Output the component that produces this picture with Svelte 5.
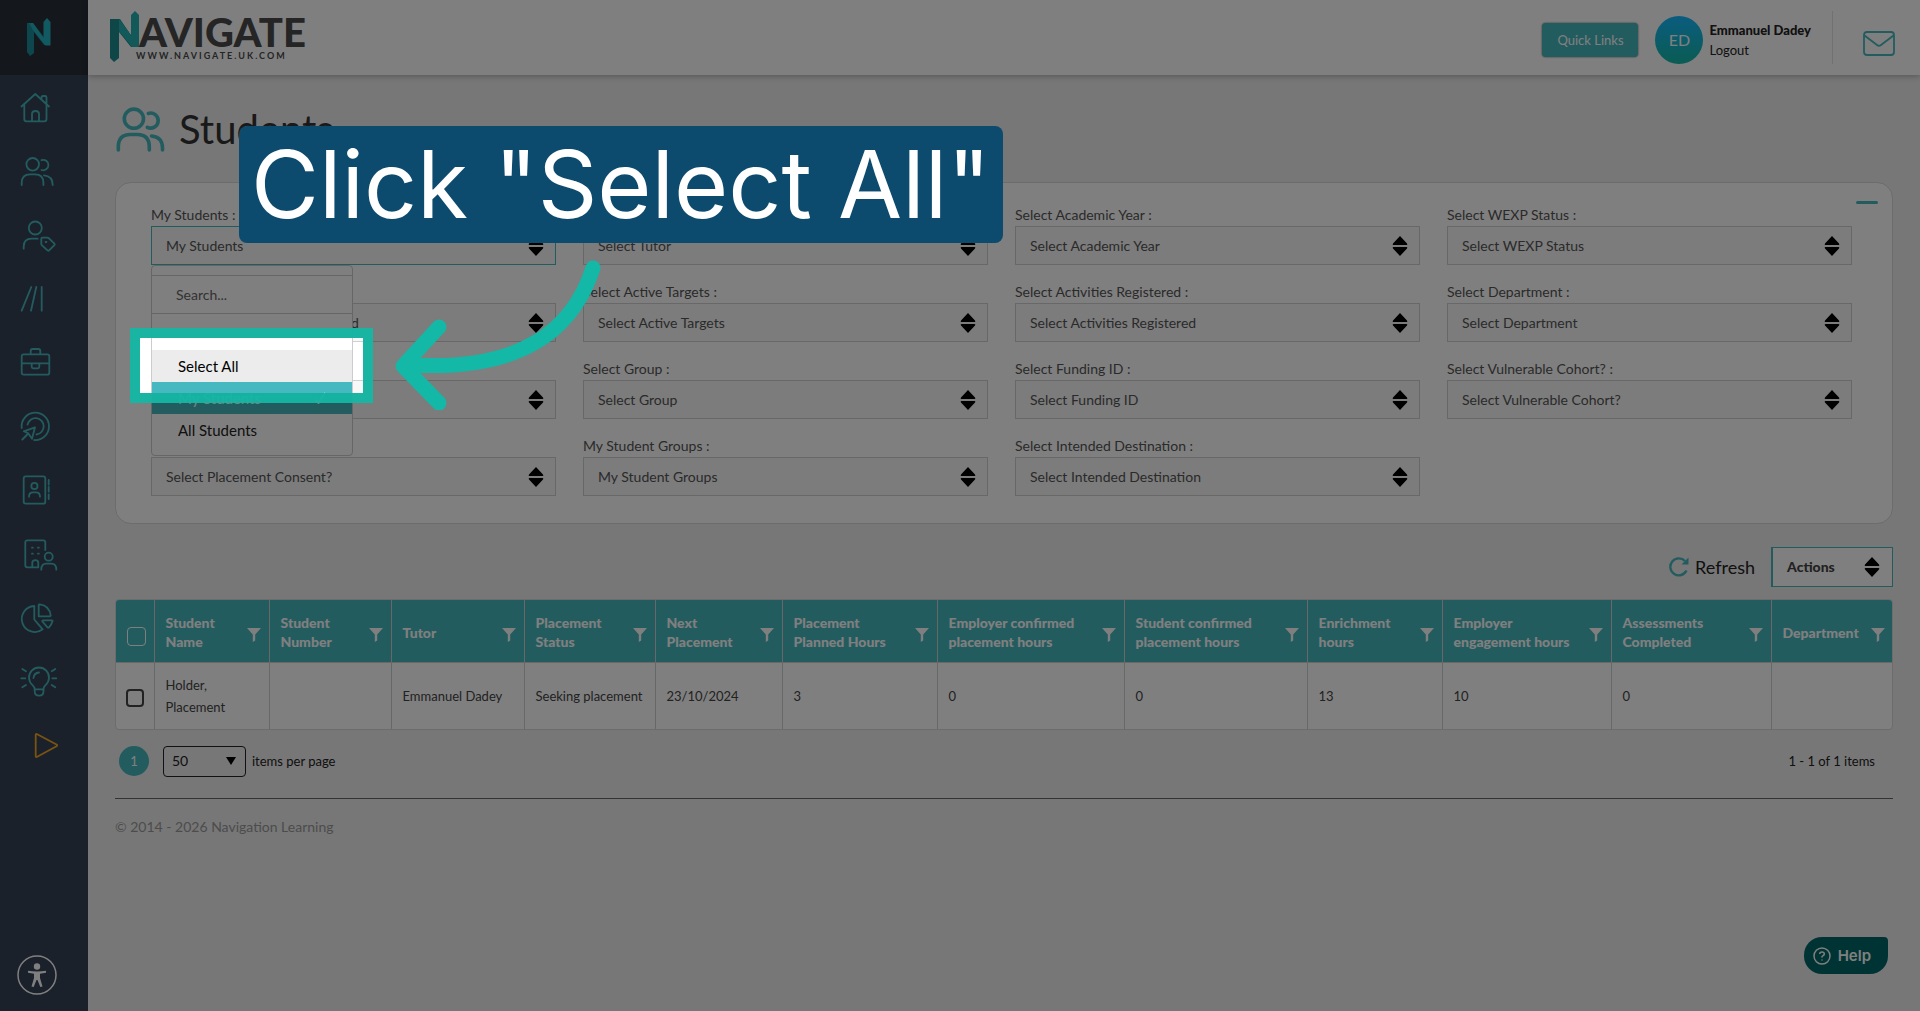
<script>
  const nav = [
    { name: 'Home', d: 'M3.5 17.5 17.3 5 31 17.5M6.3 15.5V30a2.3 2.3 0 0 0 2.3 2.3h17.6a2.3 2.3 0 0 0 2.3-2.3V15.5M23.5 10V8.500q0-1.500 1.500-1.500h2q1.500 0 1.500 1.500v6M14 32v-7q0-3 3.500-3t3.500 3v7' },
    { name: 'Students', d: 'M21 11.300a6.300 6.300 0 1 1-12.600 0a6.300 6.300 0 1 1 12.600 0zM3.700 32v-2q0-8.700 8.500-8.700h5q8.200 0 8.200 8.700v2M23.500 7.200a5.200 5.200 0 1 1 0 9.800M26 22.300q8.700.7 8.700 9.700' },
    { name: 'Tagged students', d: 'M23.800 11a6.500 6.500 0 1 1-13 0a6.500 6.500 0 1 1 13 0zM5.700 31.700v-2q0-8 8-8h6M23.300 21.700q0-1 1-1h5q1 0 1.700.7l5.400 5.200q.8.800 0 1.600l-5.300 5.200q-.8.800-1.600 0l-5.500-5q-.7-.7-.7-1.700zM27.600 25h.8' },
    { name: 'Pathways', d: 'M3.700 29.700 13.300 6M13 29.700 18.300 6M23.700 29.700V6' },
    { name: 'Placements', d: 'M5.700 9.300h23.600q2 0 2 2v16.400q0 2-2 2H5.700q-2 0-2-2V11.300q0-2 2-2zM12.700 9V6q0-2 2-2h5.600q2 0 2 2v3M3.700 18.300h27.600M13.700 18.300v3.500q0 1.500 1.500 1.500h4.600q1.500 0 1.500-1.500v-3.500' },
    { name: 'Targets', d: 'M3.700 19A13.700 13.700 0 1 1 16.300 31M9.500 15.500a8.200 8.200 0 1 1 9 10M17 18.300 5.700 22.300l4.500 2 3.800 5.500zM4.300 30.500l6-6' },
    { name: 'Contacts', d: 'M7.700 3.300h17.600q2 0 2 2v23.400q0 2-2 2H7.700q-2 0-2-2V5.300q0-2 2-2zM19.500 13a3.100 3.100 0 1 1-6.200 0a3.100 3.100 0 1 1 6.200 0zM11 23.700q0-4.400 4-4.400h3q4 0 4 4.400M30.700 7v4.700M30.700 14v4.700M30.700 21.300V26' },
    { name: 'Employers', d: 'M27.300 13V5.300q0-2-2-2h-16q-2 0-2 2v23q0 2 2 2h11v-4.500q0-2.600-3-2.600t-3 2.600v4.500M14 10.700h.8M20 10.700h.8M14 16.700h.8M20 16.700h.8M34.700 19.700a4 4 0 1 1-8 0a4 4 0 1 1 8 0zM23.300 32.700q0-6 5-6h5q5 0 5 6' },
    { name: 'Reports', d: 'M16.300 5A13 13 0 1 0 24.700 28.300L16.300 18.500zM20.700 4q0-.8 1-.7Q31.500 4.500 32.700 14.500q0 .8-.8.800H20.700zM25.300 19.300h8.500q1 0 .7 1-1 3.500-3.500 6-.8.800-1.500 0l-5-5.700q-.8-1.300.8-1.300z' },
    { name: 'Ideas', d: 'M16.700 24.300q0-2.300-2.200-4.200a10 10 0 1 1 13 0q-2 1.900-2 4.200zM16.700 24.300v2q0 4.400 4.400 4.400t4.400-4.400v-2M15.500 13q.5-5 5.500-5.500M3.300 13.300h4M34.300 13.300h4M4.300 4 8 6.300M4.300 22.300 8 20M33.700 6.300 37.300 4M33.700 20l3.600 2.300' },
    { name: 'Play', d: 'M17.700 6q0-1.500 1.500-.8L38.500 15.500q1.500.9 0 1.800L19.200 27.800q-1.500.7-1.500-.8z', gold: true }
  ];

  const filters = [
    ['My Students', 'My Students', true],
    ['Select Tutor'],
    ['Select Academic Year'],
    ['Select WEXP Status'],
    ['Select Placement', 'Select All Placement Registered'],
    ['Select Active Targets'],
    ['Select Activities Registered'],
    ['Select Department'],
    ['Select Year Group'],
    ['Select Group'],
    ['Select Funding ID'],
    ['Select Vulnerable Cohort?'],
    ['Select Placement Consent?'],
    ['My Student Groups'],
    ['Select Intended Destination']
  ];

  const columns = [
    ['Student Name', 115, 'Holder, Placement'],
    ['Student Number', 122, ''],
    ['Tutor', 133, 'Emmanuel Dadey'],
    ['Placement Status', 131, 'Seeking placement'],
    ['Next Placement', 127, '23/10/2024'],
    ['Placement Planned Hours', 155, '3'],
    ['Employer confirmed placement hours', 187, '0'],
    ['Student confirmed placement hours', 183, '0'],
    ['Enrichment hours', 135, '13'],
    ['Employer engagement hours', 169, '10'],
    ['Assessments Completed', 160, '0'],
    ['Department', 122, '']
  ];
</script>

{#snippet sort()}
  <svg class="sort" viewBox="0 0 16 20" aria-hidden="true">
    <path d="M8 0 1 7.500Q0 9 1.500 9h13Q16 9 15 7.500zM8 20 1 12.500Q0 11 1.500 11h13Q16 11 15 12.500z" />
  </svg>
{/snippet}

<div class="app">
  <aside class="sidebar">
    <a class="brand" href="#home" aria-label="Navigate">
      <svg viewBox="0 0 24 39" width="24" height="39">
        <path fill="#1c8d9a" d="M0 7v27l3 4 4-3V14L17 27h6L6 5H0z" />
        <path fill="#25b4c4" d="M16.500 4 20 0l3.500 4v23.500h-5L6 12 2 5h4l10.500 15z" />
      </svg>
    </a>
    <nav>
      {#each nav as item}
        <a href="#{item.name}" aria-label={item.name} class:gold={item.gold}>
          <svg class="line" viewBox="0 0 40 36" width="40" height="36"><path d={item.d} /></svg>
        </a>
      {/each}
    </nav>
    <button class="access" aria-label="Accessibility options">
      <svg viewBox="0 0 40 40" width="40" height="40">
        <circle cx="20" cy="20" r="19" fill="none" stroke="#fff" stroke-width="1.500" />
        <circle cx="20" cy="11.500" r="3.200" />
        <path d="M11 15.700q9 1.500 18 0v2l-6 1V23l2.500 8.500-2.200.6L20.500 25h-1l-2.800 7.100-2.200-.6L17 23v-4.300l-6-1z" />
      </svg>
    </button>
  </aside>

  <div class="body">
    <header>
      <a class="logo" href="#home" aria-label="Navigate">
        <svg viewBox="0 0 200 54" width="200" height="54">
          <path fill="#1f8d90" d="M0 8v39l4 4 5-4V21l12 15h8L10 8z" />
          <path fill="#26b3b5" d="M21 4l4-4 4 4v32h-7L9 20V8l12 16z" />
          <text class="word" x="29" y="36">AVIGATE</text>
          <text class="site" x="26" y="48">WWW.NAVIGATE.UK.COM</text>
        </svg>
      </a>
      <div class="account">
        <button class="quick">Quick Links</button>
        <span class="avatar">ED</span>
        <div class="who">
          <strong>Emmanuel Dadey</strong>
          <a href="#logout">Logout</a>
        </div>
        <a class="mail" href="#messages" aria-label="Messages">
          <svg class="line" viewBox="0 0 32 25" width="32" height="25"><path d="M4 1h24q3 0 3 3v17q0 3-3 3H4q-3 0-3-3V4q0-3 3-3zM1.500 4.500 14 14q2 1.500 4 0L30.500 4.500" /></svg>
        </a>
      </div>
    </header>

    <main>
      <h1>
        <svg class="line big" viewBox="0 0 50 46" width="50" height="46">
          <path d="M28.500 12.700a9.600 9.600 0 1 1-19.200 0a9.600 9.600 0 1 1 19.200 0zM3.300 44v-3q0-12.500 12-12.500h7q12 0 12 12.500v3M33.300 7.500a7.500 7.500 0 1 1-1 13.800M36.500 30q11 1 11 12v2" />
        </svg>
        Students
      </h1>

      <section class="panel">
        <button class="collapse" aria-label="Collapse filters"></button>
        <div class="filters">
          {#each filters as [label, value, open], i}
            <div class="field" class:open>
              <label for="f{i}">{label} :</label>
              <div class="pick">
                <select id="f{i}"><option>{value ?? label}</option></select>
                {@render sort()}
              </div>
              {#if open}
                <div class="menu">
                  <input type="text" placeholder="Search..." aria-label="Search" />
                  <ul>
                    <li><button class="all">Select All</button></li>
                    <li>
                      <button class="on">My Students
                        <svg viewBox="0 0 12 12" width="12" height="12"><path d="M1 7.500 4.500 11 11 1" /></svg>
                      </button>
                    </li>
                    <li><button>All Students</button></li>
                  </ul>
                </div>
              {/if}
            </div>
          {/each}
        </div>
      </section>

      <div class="tools">
        <button class="refresh">
          <svg viewBox="0 0 20 20" width="20" height="20">
            <path d="M17.500 13.500A8.500 8.500 0 1 1 16 4" fill="none" stroke="#46b8bf" stroke-width="2.400" />
            <path d="M19.500.5v7h-7z" fill="#46b8bf" />
          </svg>
          Refresh
        </button>
        <button class="actions">Actions {@render sort()}</button>
      </div>

      <div class="grid">
        <table>
          <colgroup>
            <col style:width="38px" />
            {#each columns as [, width]}<col style:width="{width}px" />{/each}
          </colgroup>
          <thead>
            <tr>
              <th class="tick"><input type="checkbox" aria-label="Select all rows" /></th>
              {#each columns as [title]}
                <th>
                  <div class="head">
                    <span>{title}</span>
                    <button aria-label="Filter {title}">
                      <svg viewBox="0 0 14 14" width="14" height="14"><path d="M0 0h14L8.200 6.500V12.500L5.800 14V6.500z" /></svg>
                    </button>
                  </div>
                </th>
              {/each}
            </tr>
          </thead>
          <tbody>
            <tr>
              <td class="tick"><input type="checkbox" aria-label="Select Holder, Placement" /></td>
              {#each columns as [, , cell]}<td>{cell}</td>{/each}
            </tr>
          </tbody>
        </table>
      </div>

      <div class="pager">
        <button class="page">1</button>
        <div class="size">
          <select id="size"><option>50</option></select>
          <svg viewBox="0 0 10 8" width="10" height="8"><path d="M0 0h10L5 8z" /></svg>
        </div>
        <label for="size">items per page</label>
        <span class="count">1 - 1 of 1 items</span>
      </div>

      <footer>© 2014 - 2026 Navigation Learning</footer>
    </main>
  </div>

  <button class="help">
    <svg viewBox="0 0 18 18" width="18" height="18">
      <circle cx="9" cy="9" r="8" />
      <path d="M6.700 7Q6.800 4.900 9 4.900T11.300 6.900Q11.300 8 10 8.700T9 10.600M9 12.500v1" />
    </svg>
    Help
  </button>

  <div class="spotlight"></div>
  <svg class="arrow" viewBox="0 0 220 160" width="220" height="160" aria-hidden="true">
    <path d="M203 18C183 80 132 121 22 115M49 77 13 116 49 153" />
  </svg>
  <div class="callout">Click "Select All"</div>
</div>

<style>
  :global(body) { background: #eee; }
  .app, .app * { box-sizing: border-box; }
  .app {
    position: relative;
    display: flex;
    min-height: 100vh;
    overflow: hidden;
    background: #eee;
    color: #222;
    font: 14px/20px Lato, "Open Sans", sans-serif;
  }
  button, select, input { font: inherit; color: inherit; }
  button { padding: 0; border: 0; background: none; cursor: pointer; }
  a { color: inherit; text-decoration: none; }
  svg { display: block; flex: none; }
  .line { fill: none; stroke: #46b8bf; stroke-width: 1.8; stroke-linecap: round; stroke-linejoin: round; }

  .sidebar { display: flex; flex-direction: column; flex: none; width: 88px; background: #364256; }
  .brand { display: flex; align-items: center; height: 75px; padding-left: 27px; background: #28303a; }
  nav a { display: flex; align-items: center; height: 64px; padding-left: 18px; }
  .gold .line { stroke: #f5a623; }
  .access { margin: auto 0 16px 17px; width: 40px; }
  .access svg { fill: #fff; }

  .body { flex: 1; min-width: 0; }
  header {
    display: flex;
    align-items: center;
    justify-content: space-between;
    height: 75px;
    padding: 0 25px 0 22px;
    background: #fff;
    box-shadow: 0 1px 6px rgba(0, 0, 0, .3);
  }
  .logo svg { overflow: visible; }
  .word { font: 900 40px Lato, sans-serif; fill: #4a4a4a; }
  .site { font: 700 9px Lato, sans-serif; letter-spacing: 2px; fill: #4a4a4a; }
  .account { display: flex; align-items: center; height: 53px; font-size: 13px; }
  .quick { width: 96px; height: 34px; margin-top: 4px; border-radius: 4px; background: #46b8bf; color: #fff; box-shadow: 0 0 2px #555; }
  .avatar {
    display: grid;
    place-items: center;
    width: 48px;
    height: 48px;
    margin: 4px 6px 0 17px;
    border-radius: 50%;
    background: linear-gradient(#14b8ff, #14b8a6);
    color: #fff;
    font-size: 16px;
  }
  .who { display: grid; padding: 4px 21px 0 0; }
  .who strong { font-weight: 900; }
  .mail { display: flex; align-items: center; height: 53px; padding: 12px 0 0 30px; border-left: 1px solid #e2e2e2; }

  main { padding: 25px 27px; }
  h1 { display: flex; align-items: center; gap: 14px; height: 57px; margin: 0 0 25px; font-size: 40px; font-weight: 400; line-height: 56px; color: #333; }
  .big { stroke-width: 3.6; }

  .panel { position: relative; padding: 22px 40px 27px 35px; border: 1px solid #d8d8d8; border-radius: 16px; background: #fff; }
  .collapse { position: absolute; top: 18px; right: 14px; width: 22px; height: 3px; border-radius: 2px; background: #46b8bf; }
  .filters { display: grid; grid-template-columns: repeat(4, 1fr); gap: 17px 27px; color: #555; }
  .field { position: relative; }
  .field label { display: block; height: 21px; white-space: nowrap; }
  .pick { display: grid; align-items: center; }
  .pick select, .pick .sort { grid-area: 1 / 1; }
  .pick select { appearance: none; width: 100%; height: 39px; padding: 0 14px; border: 1px solid #d0d0d0; border-radius: 0; background: #f8f8f8; }
  .open select { border-color: #46b8bf; }
  .sort { width: 16px; height: 20px; fill: #000; pointer-events: none; }
  .pick .sort { justify-self: end; margin-right: 12px; }

  .menu { position: absolute; z-index: 1; top: 60px; left: 0; width: 202px; padding: 9px 0; border: 1px solid #ccc; border-radius: 4px; background: #fff; color: #222; }
  .menu input { display: block; width: 100%; height: 39px; padding: 0 24px; border: solid #ccc; border-width: 1px 0; background: #fff; }
  .menu input::placeholder { color: #666; opacity: 1; }
  .menu ul { margin: 0; padding: 36px 0 0; list-style: none; }
  .menu button { display: flex; align-items: center; justify-content: space-between; width: 100%; height: 32px; padding: 0 26px; font-size: 15px; }
  .menu .all { background: #ececec; color: #000; }
  .menu .on { background: #46b8bf; color: #fff; }
  .on svg { fill: none; stroke: #fff; stroke-width: 2; }

  .tools { display: flex; align-items: center; justify-content: flex-end; gap: 16px; margin: 23px 0 12px; }
  .refresh { display: flex; align-items: center; gap: 6px; font-size: 18px; }
  .actions { display: flex; align-items: center; justify-content: space-between; width: 122px; height: 40px; padding: 0 12px 0 14px; border: 1px solid #46b8bf; border-left-width: 2px; background: #fff; color: #444; font-weight: 900; }

  .grid { overflow: hidden; border: 1px solid #d8d8d8; border-radius: 4px; background: #fff; }
  table { width: 100%; table-layout: fixed; border-collapse: collapse; color: #444; }
  th, td { padding: 0 8px 0 11px; border-right: 1px solid #d0d0d0; text-align: left; }
  th:last-child, td:last-child { border-right: 0; }
  th { height: 62px; background: #46b8bf; color: #fff; font-weight: 900; line-height: 19px; }
  td { height: 67px; border-top: 1px solid #d0d0d0; font-size: 13px; line-height: 22px; }
  .head { display: flex; align-items: center; justify-content: space-between; gap: 8px; padding-top: 3px; }
  .head button { padding-top: 6px; }
  .head svg { fill: #fff; }
  .tick { padding: 0 0 0 10px; }
  .tick input { appearance: none; display: block; width: 18px; height: 18px; margin: 4px 0 0; border: 2px solid #444; border-radius: 4px; }
  th.tick input { width: 19px; height: 19px; margin: 12px 0 0 1px; border: 1px solid #fff; }

  .pager { display: flex; align-items: center; height: 69px; padding: 0 18px 6px 4px; border-bottom: 1px solid #666; font-size: 13px; }
  .page { width: 30px; height: 30px; margin-right: 14px; border-radius: 50%; background: #46b8bf; color: #fff; }
  .size { display: grid; align-items: center; width: 83px; margin-right: 6px; font-size: 14px; }
  .size select, .size svg { grid-area: 1 / 1; }
  .size select { appearance: none; height: 31px; padding: 0 8px; border: 1px solid #222; border-radius: 4px; background: transparent; }
  .size svg { justify-self: end; margin-right: 10px; pointer-events: none; }
  .count { margin-left: auto; }
  footer { padding-top: 18px; color: #999; }

  .help {
    position: absolute;
    right: 32px;
    bottom: 37px;
    display: flex;
    align-items: center;
    gap: 7px;
    height: 37px;
    padding: 0 17px 0 9px;
    border-radius: 18px 4px 18px 18px;
    background: #066;
    color: #fff;
    font: 600 15px Inter, sans-serif;
  }
  .help svg { fill: none; stroke: #fff; stroke-width: 1.5; }

  .spotlight { position: absolute; z-index: 2; top: 338px; left: 140px; width: 223px; height: 55px; box-shadow: 0 0 0 10px rgba(20, 184, 166, .94), 0 0 0 9999px rgba(0, 0, 0, .5); pointer-events: none; }
  .arrow { position: absolute; z-index: 3; top: 250px; left: 390px; fill: none; stroke: #14b8a6; stroke-width: 15; stroke-linecap: round; stroke-linejoin: round; }
  .callout { position: absolute; z-index: 3; top: 126px; left: 239px; padding: 0 12px; border-radius: 8px; background: #0c4a6e; color: #fff; font: 93px/117px Inter, sans-serif; white-space: nowrap; }
</style>
